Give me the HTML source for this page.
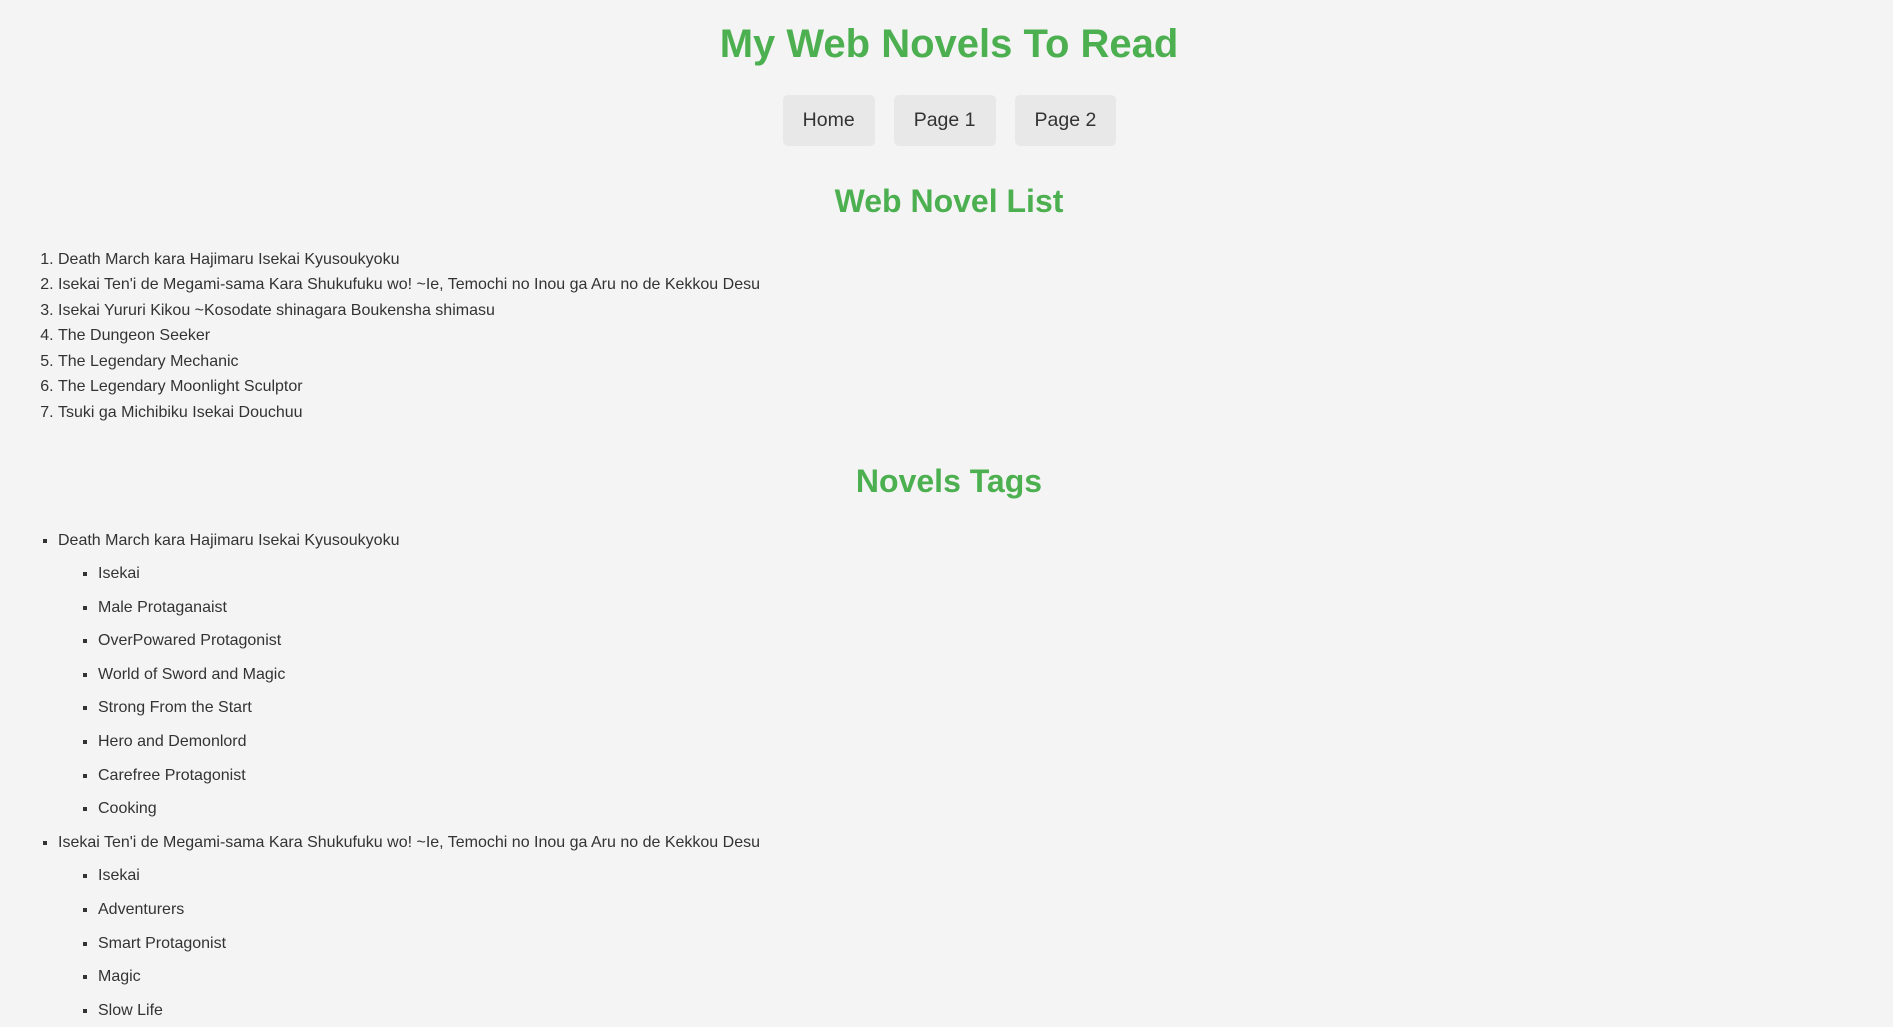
<!DOCTYPE html>
<html><head><meta charset="utf-8"><style>
html,body{margin:0;padding:0;background:#f4f4f4;width:1893px;height:952px;overflow:hidden;font-family:"Liberation Sans",Arial,sans-serif;color:#333}
.t{position:absolute;left:0;width:1898px;text-align:center;color:#4caf50;font-weight:bold;margin:0}
h1.t{top:22px;font-size:40px;line-height:44px}
h2.t{font-size:32px;line-height:36px}
.nav{position:absolute;top:95px;left:0;width:1899px;text-align:center;font-size:19.5px}
.nav a{display:inline-block;height:51px;line-height:51px;padding:0 20px;background:#e8e8e8;border-radius:5px;margin:0 9.5px;color:#333;text-decoration:none}
ol,ul{position:absolute;left:0;margin:0;padding-left:58px;font-size:16px}
ol{top:246.5px;line-height:25.6px}
ul{top:523.5px;line-height:33.6px;list-style:square}
ul ul{position:static;padding-left:40px}
</style></head><body>
<h1 class="t">My Web Novels To Read</h1>
<div class="nav"><a>Home</a><a>Page 1</a><a>Page 2</a></div>
<h2 class="t" style="top:183px">Web Novel List</h2>
<ol>
<li>Death March kara Hajimaru Isekai Kyusoukyoku</li>
<li>Isekai Ten'i de Megami-sama Kara Shukufuku wo! ~Ie, Temochi no Inou ga Aru no de Kekkou Desu</li>
<li>Isekai Yururi Kikou ~Kosodate shinagara Boukensha shimasu</li>
<li>The Dungeon Seeker</li>
<li>The Legendary Mechanic</li>
<li>The Legendary Moonlight Sculptor</li>
<li>Tsuki ga Michibiku Isekai Douchuu</li>
</ol>
<h2 class="t" style="top:463px">Novels Tags</h2>
<ul>
<li>Death March kara Hajimaru Isekai Kyusoukyoku
<ul><li>Isekai</li><li>Male Protaganaist</li><li>OverPowared Protagonist</li><li>World of Sword and Magic</li><li>Strong From the Start</li><li>Hero and Demonlord</li><li>Carefree Protagonist</li><li>Cooking</li></ul></li>
<li>Isekai Ten'i de Megami-sama Kara Shukufuku wo! ~Ie, Temochi no Inou ga Aru no de Kekkou Desu
<ul><li>Isekai</li><li>Adventurers</li><li>Smart Protagonist</li><li>Magic</li><li>Slow Life</li></ul></li>
</ul>
</body></html>
